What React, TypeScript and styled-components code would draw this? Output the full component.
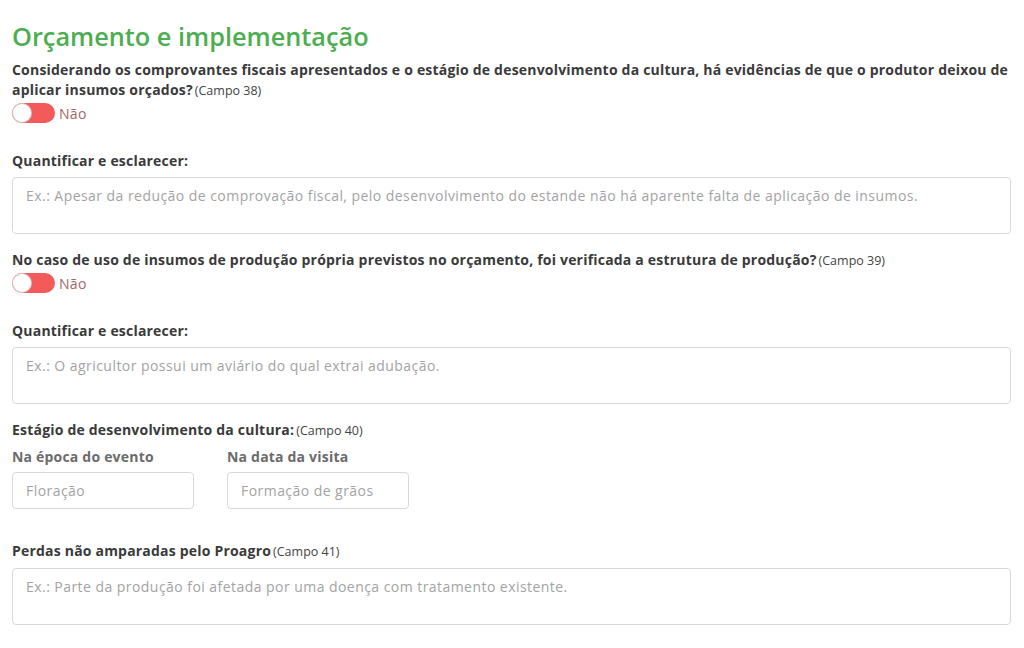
import React, { useState } from "react";
import styled, { createGlobalStyle } from "styled-components";

const FONT = `"Open Sans", "Noto Sans", sans-serif`;

const Global = createGlobalStyle`
  html, body { margin: 0; padding: 0; background: #fff; }
  body { font-family: ${FONT}; color: #333; }
  * { box-sizing: border-box; }
`;

const Page = styled.div`
  padding: 18px 13px 20px 12px;
  display: flex;
  flex-direction: column;
`;

const Title = styled.h1`
  margin: 0 0 6px 0;
  font-size: 25.3px;
  font-weight: 600;
  color: #4cae50;
  line-height: 36px;
`;

const Question = styled.div`
  font-size: 14px;
  font-weight: 700;
  color: #3a3a3a;
  line-height: 20px;
  letter-spacing: 0.2px;
`;

const QText = styled.span``;

const Campo = styled.span`
  font-size: 12.5px;
  font-weight: 400;
  letter-spacing: 0;
  color: #444;
  margin-left: 2px;
`;

const ToggleRow = styled.label`
  display: flex;
  align-items: center;
  gap: 4px;
  margin-top: 2px;
  cursor: pointer;
`;

const Track = styled.span<{ $on: boolean }>`
  position: relative;
  width: 43px;
  height: 20px;
  border-radius: 10px;
  background: ${(p) => (p.$on ? "#4cae50" : "#f55a5a")};
  flex-shrink: 0;
`;

const Knob = styled.span<{ $on: boolean }>`
  position: absolute;
  top: 1px;
  left: ${(p) => (p.$on ? "24px" : "1px")};
  width: 18px;
  height: 18px;
  border-radius: 50%;
  background: #fff;
  box-shadow: 0 0 0 1px #d6c4c4;
`;

const ToggleText = styled.span`
  font-size: 14px;
  letter-spacing: 0.3px;
  color: #a26868;
`;

const FieldLabel = styled.div<{ $top?: number }>`
  font-size: 14px;
  font-weight: 700;
  color: #3a3a3a;
  line-height: 20px;
  letter-spacing: 0.2px;
  margin-top: ${(p) => p.$top ?? 0}px;
  margin-bottom: 6px;
`;

const TextArea = styled.textarea`
  width: 100%;
  height: 57px;
  border: 1px solid #d9d9d9;
  border-radius: 4px;
  padding: 8px 13px;
  font-family: ${FONT};
  font-size: 14px;
  letter-spacing: 0.45px;
  line-height: 20px;
  resize: none;
  color: #333;
  outline: none;
  &::placeholder { color: #a3a3a3; }
`;

const Block = styled.div<{ $top?: number }>`
  margin-top: ${(p) => p.$top ?? 0}px;
`;

const StageRow = styled.div`
  display: flex;
  gap: 33px;
  margin-top: 6px;
`;

const StageCol = styled.div`
  display: flex;
  flex-direction: column;
  gap: 5px;
`;

const SubLabel = styled.div`
  font-size: 14px;
  font-weight: 700;
  color: #6b6b6b;
  line-height: 20px;
  letter-spacing: 0.2px;
`;

const Input = styled.input`
  width: 182px;
  height: 37px;
  border: 1px solid #d9d9d9;
  border-radius: 4px;
  padding: 0 13px;
  font-family: ${FONT};
  font-size: 14px;
  letter-spacing: 0.45px;
  outline: none;
  &::placeholder { color: #a3a3a3; }
`;

function Toggle() {
  const [on, setOn] = useState(false);
  return (
    <ToggleRow onClick={() => setOn(!on)}>
      <Track $on={on}>
        <Knob $on={on} />
      </Track>
      <ToggleText>{on ? "Sim" : "Não"}</ToggleText>
    </ToggleRow>
  );
}

export default function App() {
  return (
    <>
      <Global />
      <Page>
        <Title>Orçamento e implementação</Title>
        <Question>
          <QText>
            Considerando os comprovantes fiscais apresentados e o estágio de desenvolvimento da cultura, há evidências de que o produtor deixou de aplicar insumos orçados?
          </QText>
          <Campo>(Campo 38)</Campo>
        </Question>
        <Toggle />
        <FieldLabel $top={28}>Quantificar e esclarecer:</FieldLabel>
        <TextArea placeholder="Ex.: Apesar da redução de comprovação fiscal, pelo desenvolvimento do estande não há aparente falta de aplicação de insumos." />
        <Block $top={16}>
          <Question>
            <QText>
              No caso de uso de insumos de produção própria previstos no orçamento, foi verificada a estrutura de produção?
            </QText>
            <Campo>(Campo 39)</Campo>
          </Question>
          <Toggle />
        </Block>
        <FieldLabel $top={28}>Quantificar e esclarecer:</FieldLabel>
        <TextArea placeholder="Ex.: O agricultor possui um aviário do qual extrai adubação." />
        <Block $top={16}>
          <Question>
            <QText>Estágio de desenvolvimento da cultura:</QText>
            <Campo>(Campo 40)</Campo>
          </Question>
          <StageRow>
            <StageCol>
              <SubLabel>Na época do evento</SubLabel>
              <Input placeholder="Floração" />
            </StageCol>
            <StageCol>
              <SubLabel>Na data da visita</SubLabel>
              <Input placeholder="Formação de grãos" />
            </StageCol>
          </StageRow>
        </Block>
        <FieldLabel $top={32}>
          <QText>Perdas não amparadas pelo Proagro</QText>
          <Campo>(Campo 41)</Campo>
        </FieldLabel>
        <TextArea placeholder="Ex.: Parte da produção foi afetada por uma doença com tratamento existente." />
      </Page>
    </>
  );
}
